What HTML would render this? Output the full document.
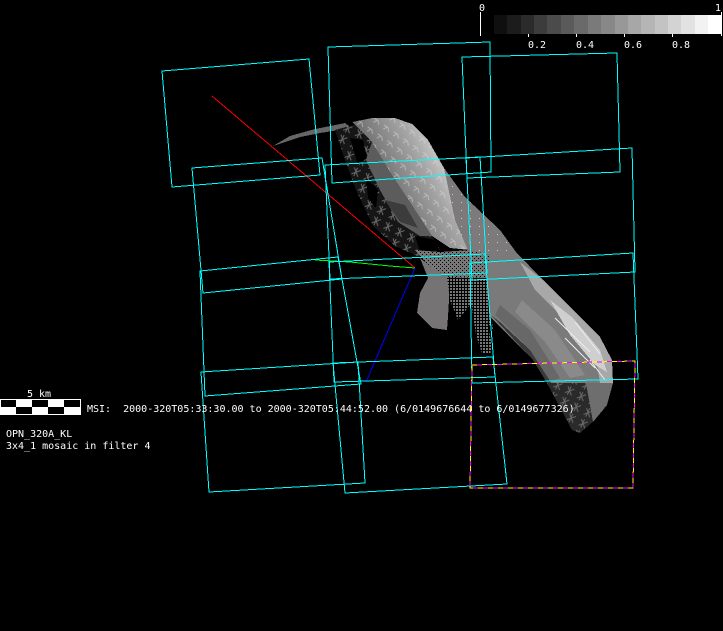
<!DOCTYPE html>
<html><head><meta charset="utf-8">
<style>
html,body{margin:0;padding:0;background:#000;width:723px;height:631px;overflow:hidden}
svg{display:block}
text{font-family:"DejaVu Sans Mono","Liberation Mono",monospace;font-size:10px;fill:#fff}
</style></head><body>
<svg width="723" height="631" viewBox="0 0 723 631" xmlns="http://www.w3.org/2000/svg">
<defs>
<pattern id="dith" width="4" height="4" patternUnits="userSpaceOnUse"><rect width="4" height="4" fill="#777"/><rect x="0" y="0" width="1" height="1" fill="#000"/><rect x="2" y="2" width="1" height="1" fill="#000"/></pattern>
<pattern id="sparse" width="3" height="3" patternUnits="userSpaceOnUse"><rect width="3" height="3" fill="#000"/><rect width="2" height="2" fill="#777"/></pattern>
<pattern id="star" width="13" height="12" patternUnits="userSpaceOnUse" patternTransform="rotate(25)"><path d="M2 2l7 7M9 2l-7 7M5 1v9" stroke="#6a6a6a" stroke-width="1" fill="none"/></pattern>
<pattern id="marks" width="12" height="11" patternUnits="userSpaceOnUse" patternTransform="rotate(35)"><path d="M2 3h5l3 3M6 3l-2 4" stroke="#ddd" stroke-width="1" fill="none" opacity=".5"/></pattern>
<pattern id="whitedots" width="9" height="8" patternUnits="userSpaceOnUse"><rect x="2" y="2" width="1" height="1" fill="#ccc"/></pattern>
<linearGradient id="head" gradientUnits="userSpaceOnUse" x1="360" y1="175" x2="440" y2="135">
<stop offset="0" stop-color="#555"/><stop offset=".35" stop-color="#808080"/><stop offset=".7" stop-color="#a8a8a8"/><stop offset=".88" stop-color="#c4c4c4"/><stop offset="1" stop-color="#9a9a9a"/>
</linearGradient>
</defs>
<rect width="723" height="631" fill="#000"/>

<g shape-rendering="crispEdges">
<polygon points="273,146 290,136 315,129 345,123 352,128 320,133 300,137 282,143" fill="#666"/>
<polygon points="335,130 372,120 400,180 440,250 417,256 395,246 373,226 356,190 345,160" fill="#161616"/>
<polygon points="335,130 372,120 400,180 440,250 417,256 395,246 373,226 356,190 345,160" fill="url(#star)"/>
<polygon points="350,138 363,140 367,158 358,165" fill="#000"/>
<polygon points="366,178 378,190 376,208 368,198" fill="#000"/>
<polygon points="352,122 372,118 395,118 412,124 428,140 444,168 465,197 480,212 470,250 450,248 432,236 412,205 392,175 372,142" fill="url(#head)"/>
<polygon points="352,122 372,118 395,118 412,124 428,140 444,168 465,197 480,212 470,250 450,248 432,236 412,205 392,175 372,142" fill="url(#marks)"/>
<polygon points="372,142 392,175 412,205 432,236 420,236 398,222 380,190 366,160" fill="#5c5c5c"/>
<polygon points="385,200 405,205 418,228 400,222" fill="#3c3c3c"/>
<polygon points="415,236 435,240 440,252 422,258" fill="#000"/>
<polygon points="444,168 465,197 500,230 516,252 543,280 505,300 487,275 470,255 455,220" fill="#7c7a7a"/>
<polygon points="444,168 465,197 500,230 516,252 543,280 505,300 487,275 470,255 455,220" fill="url(#whitedots)"/>
<polygon points="415,250 440,252 470,250 490,255 490,290 470,280 440,278 428,265" fill="url(#dith)"/>
<polygon points="420,258 435,270 447,275 450,283 448,317 447,330 432,328 417,313 420,293 428,278" fill="#757373"/>
<polygon points="447,277 490,278 490,300 493,330 482,315 470,305 458,320 450,300" fill="url(#sparse)"/>
<polygon points="472,308 485,312 492,345 490,354 482,353 476,335" fill="url(#sparse)"/>
<!-- tail -->
<polygon points="486,262 513,250 543,280 573,310 600,337 612,360 613,383 603,410 580,433 572,430 547,383 533,360 490,317" fill="#7a7a7a"/>
<polygon points="520,262 543,280 573,310 600,337 612,360 613,383 600,383 595,350 565,320 535,290" fill="#a8a8a8"/>
<polygon points="550,300 573,318 600,350 607,372 595,365 570,335" fill="#cfcfcf"/>
<polygon points="522,300 555,330 585,375 570,378 545,342 515,312" fill="#8a8a8a"/>
<polygon points="500,305 530,330 560,378 548,382 525,345 495,315" fill="#686868"/>
<polygon points="492,316 533,360 547,383 552,384 530,350 500,322" fill="#3a3a3a"/>
<polygon points="547,383 590,383 595,420 580,433 572,430" fill="#2a2a2a"/>
<polygon points="547,383 590,383 595,420 580,433 572,430" fill="url(#star)"/>
<polygon points="586,383 613,383 607,405 593,422" fill="#6e6e6e"/>
</g>
<g stroke="#eee" stroke-width="1" fill="none">
<path d="M555 318l35 34M565 338l30 30M575 322l25 32M590 360l15 20"/>
</g>

<g fill="none" shape-rendering="crispEdges">
<polyline points="212,96 415,268" stroke="#f00"/>
<polyline points="315,260 350,262 390,266 415,268" stroke="#0f0"/>
<polyline points="415,268 366,382" stroke="#00f"/>
</g>

<g fill="none" stroke="#0ff" stroke-width="1" shape-rendering="crispEdges">
<polygon points="162,71 309,59 320,175 172,187"/>
<polygon points="328,47 490,42 491,172 332,183"/>
<polygon points="462,57 617,53 620,172 467,178"/>
<polygon points="192,168 322,158 342,279 203,293"/>
<polygon points="325,165 480,157 487,273 330,279"/>
<polygon points="466,158 632,148 635,272 472,280"/>
<polygon points="200,271 338,257 361,384 205,396"/>
<polygon points="329,262 485,254 495,377 334,382"/>
<polygon points="470,263 633,253 638,379 472,383"/>
<polygon points="201,372 358,362 365,483 209,492"/>
<polygon points="333,363 493,357 507,484 345,493"/>
</g>
<g fill="none" shape-rendering="crispEdges">
<polygon points="472,365 635,361 633,488 470,488" stroke="#f0f"/>
<polygon points="472,365 635,361 633,488 470,488" stroke="#ff0" stroke-dasharray="5 5"/>
</g>

<g shape-rendering="crispEdges">
<rect x="494" y="15" width="14" height="19" fill="#0f0f0f"/>
<rect x="507" y="15" width="14" height="19" fill="#1c1c1c"/>
<rect x="521" y="15" width="14" height="19" fill="#2b2b2b"/>
<rect x="534" y="15" width="14" height="19" fill="#3c3c3c"/>
<rect x="547" y="15" width="14" height="19" fill="#4b4b4b"/>
<rect x="561" y="15" width="14" height="19" fill="#5a5a5a"/>
<rect x="574" y="15" width="14" height="19" fill="#6a6a6a"/>
<rect x="588" y="15" width="14" height="19" fill="#7a7a7a"/>
<rect x="601" y="15" width="14" height="19" fill="#888"/>
<rect x="615" y="15" width="14" height="19" fill="#989898"/>
<rect x="628" y="15" width="14" height="19" fill="#a7a7a7"/>
<rect x="641" y="15" width="14" height="19" fill="#b5b5b5"/>
<rect x="655" y="15" width="14" height="19" fill="#c3c3c3"/>
<rect x="668" y="15" width="14" height="19" fill="#d3d3d3"/>
<rect x="681" y="15" width="14" height="19" fill="#e2e2e2"/>
<rect x="695" y="15" width="14" height="19" fill="#f2f2f2"/>
<rect x="708" y="15" width="13" height="19" fill="#fff"/>
<rect x="480" y="12" width="1" height="24" fill="#fff"/>
<rect x="721" y="12" width="1" height="24" fill="#fff"/>
<rect x="528" y="34" width="1" height="3" fill="#fff"/>
<rect x="576" y="34" width="1" height="3" fill="#fff"/>
<rect x="624" y="34" width="1" height="3" fill="#fff"/>
<rect x="672" y="34" width="1" height="3" fill="#fff"/>
</g>
<text x="479" y="11">0</text>
<text x="715" y="11">1</text>
<text x="528" y="48">0.2</text>
<text x="576" y="48">0.4</text>
<text x="624" y="48">0.6</text>
<text x="672" y="48">0.8</text>

<g shape-rendering="crispEdges">
<rect x="0" y="399" width="81" height="16" fill="#fff"/>
<rect x="1" y="400" width="15" height="7" fill="#000"/>
<rect x="32" y="400" width="16" height="7" fill="#000"/>
<rect x="64" y="400" width="16" height="7" fill="#000"/>
<rect x="16" y="407" width="16" height="7" fill="#000"/>
<rect x="48" y="407" width="16" height="7" fill="#000"/>
</g>
<text x="27" y="397">5 km</text>
<text x="87" y="412" xml:space="preserve">MSI:  2000-320T05:33:30.00 to 2000-320T05:44:52.00 (6/0149676644 to 6/0149677326)</text>
<text x="6" y="437">OPN_320A_KL</text>
<text x="6" y="449">3x4_1 mosaic in filter 4</text>
</svg>
</body></html>
